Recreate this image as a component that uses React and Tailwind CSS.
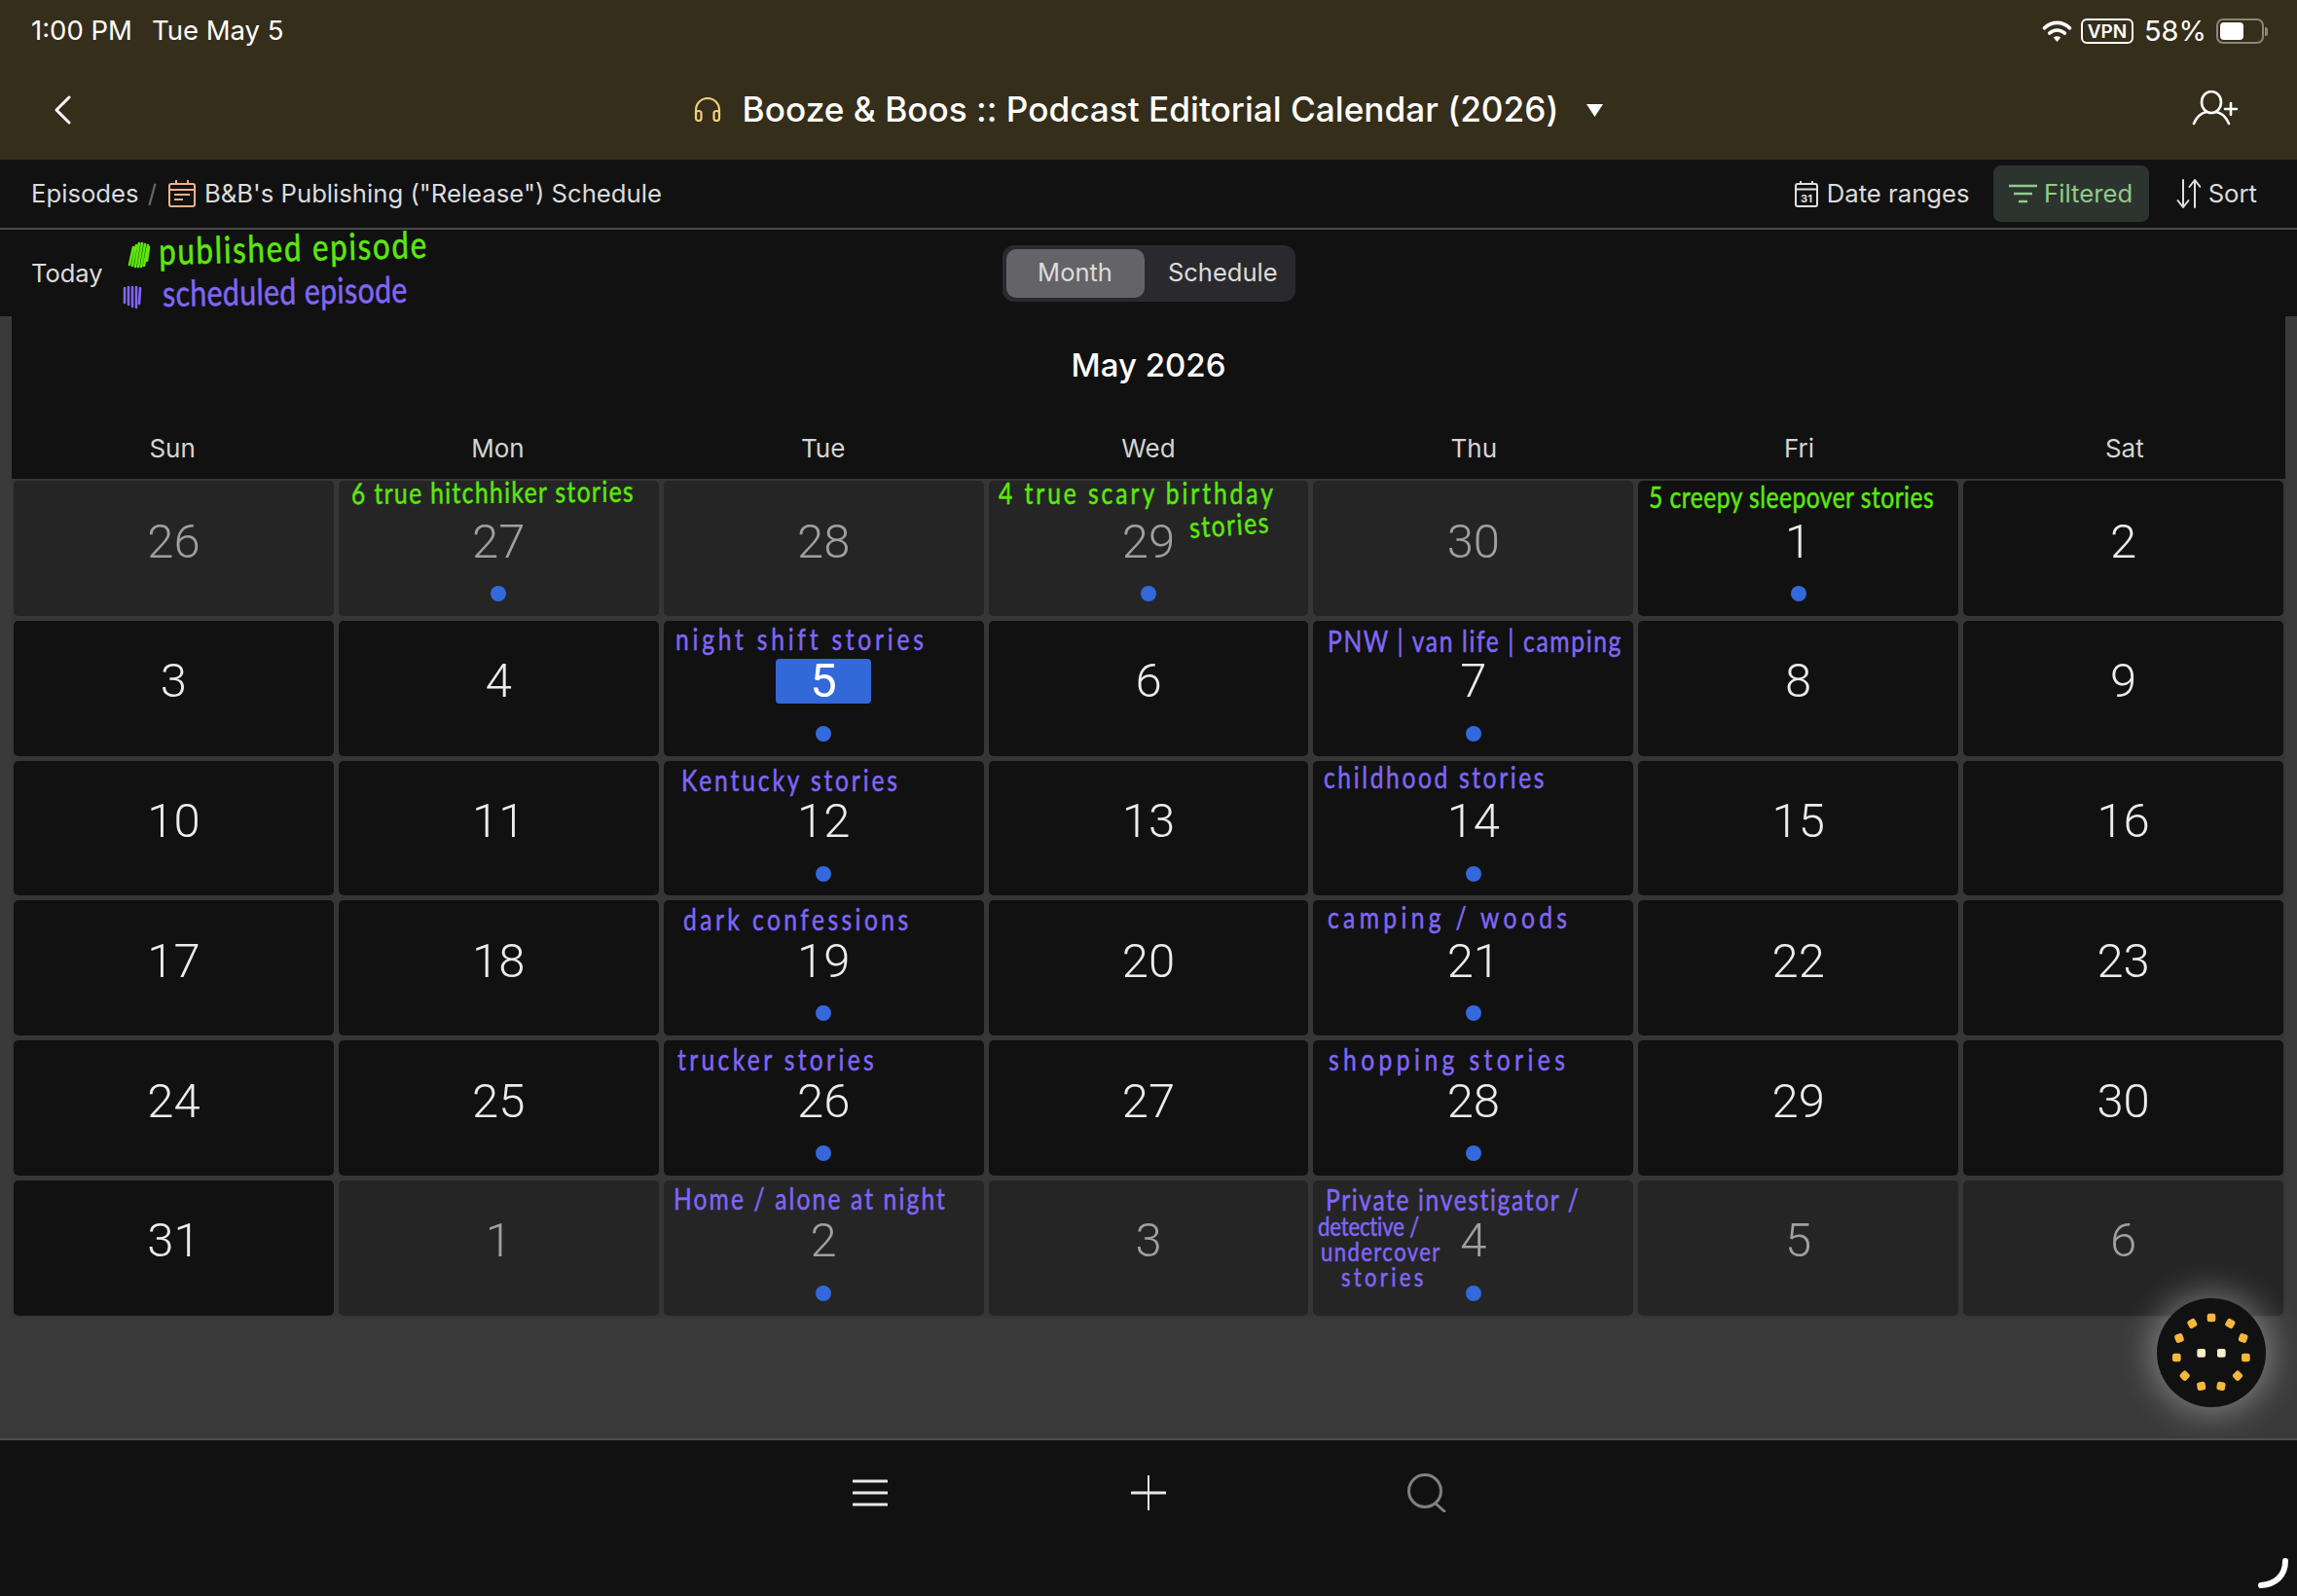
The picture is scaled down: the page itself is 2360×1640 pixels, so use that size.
const weekdays = ["Sun", "Mon", "Tue", "Wed", "Thu", "Fri", "Sat"];

const green = "text-[#5ce80e]";
const purple = "text-[#8066f6]";

// handwritten annotations, keyed by the cell's position in the grid
const notes = {
  1: [{ text: "6 true hitchhiker stories", cls: `text-[30px] left-[13px] top-[-1px] tracking-[1.7px] -rotate-[0.5deg] ${green}` }],
  3: [
    { text: "4 true scary birthday", cls: `text-[30px] left-[10px] top-[-1px] tracking-[3.6px] ${green}` },
    { text: "stories", cls: `text-[30px] left-[206px] top-[34px] tracking-[1.9px] -rotate-[4deg] ${green}` },
  ],
  5: [{ text: "5 creepy sleepover stories", cls: `text-[30px] left-[11px] top-[3px] tracking-[0.6px] ${green}` }],
  9: [{ text: "night shift stories", cls: `text-[30px] left-[12px] top-[5px] tracking-[4.6px] ${purple}` }],
  11: [{ text: "PNW | van life | camping", cls: `text-[30px] left-[15px] top-[7px] tracking-[2px] ${purple}` }],
  16: [{ text: "Kentucky stories", cls: `text-[30px] left-[18px] top-[6px] tracking-[3.5px] ${purple}` }],
  18: [{ text: "childhood stories", cls: `text-[30px] left-[11px] top-[3px] tracking-[3.2px] ${purple}` }],
  23: [{ text: "dark confessions", cls: `text-[30px] left-[20px] top-[6px] tracking-[4.2px] ${purple}` }],
  25: [{ text: "camping / woods", cls: `text-[30px] left-[15px] top-[4px] tracking-[5.3px] ${purple}` }],
  30: [{ text: "trucker stories", cls: `text-[30px] left-[14px] top-[6px] tracking-[4.1px] ${purple}` }],
  32: [{ text: "shopping stories", cls: `text-[30px] left-[16px] top-[6px] tracking-[5.4px] ${purple}` }],
  37: [{ text: "Home / alone at night", cls: `text-[30px] left-[10px] top-[5px] tracking-[2.6px] ${purple}` }],
  39: [
    { text: "Private investigator /", cls: `text-[30px] left-[13px] top-[6px] tracking-[2px] ${purple}` },
    { text: "detective /", cls: `text-[27px] left-[5px] top-[34px] tracking-[-0.2px] ${purple}` },
    { text: "undercover", cls: `text-[27px] left-[8px] top-[60px] tracking-[1.7px] ${purple}` },
    { text: "stories", cls: `text-[27px] left-[29px] top-[86px] tracking-[4px] ${purple}` },
  ],
};

const withDot = new Set([1, 3, 5, 9, 11, 16, 18, 23, 25, 30, 32, 37, 39]);

const days = [
  26, 27, 28, 29, 30, 1, 2,
  3, 4, 5, 6, 7, 8, 9,
  10, 11, 12, 13, 14, 15, 16,
  17, 18, 19, 20, 21, 22, 23,
  24, 25, 26, 27, 28, 29, 30,
  31, 1, 2, 3, 4, 5, 6,
];

function isOutside(i) {
  return i < 5 || i > 35;
}

function DayCell({ day, index }) {
  const outside = isOutside(index);
  const today = index === 9;
  return (
    <div className={`relative h-[138.8px] rounded-[5px] flex flex-col items-center pt-[39px] ${outside ? "bg-[#252525]" : "bg-[#111111]"}`}>
      {today ? (
        <div className="w-[98px] h-[46px] rounded-[4px] bg-[#3368d8] flex items-center justify-center text-[49px] text-white font-['Roboto',sans-serif] leading-none">
          {day}
        </div>
      ) : (
        <div className={`h-[46px] flex items-center text-[49px] font-light font-['Roboto',sans-serif] leading-none ${outside ? "text-[#a0a0a0]" : "text-[#ececec]"}`}>
          {day}
        </div>
      )}
      {withDot.has(index) && <div className="mt-[23px] w-[16px] h-[16px] rounded-full bg-[#3369dc]" />}
      {(notes[index] || []).map((n) => (
        <span key={n.text} className={`absolute whitespace-nowrap leading-[26px] origin-left scale-x-[0.82] [-webkit-text-stroke:0.5px_currentColor] font-['Lato',sans-serif] ${n.cls}`}>
          {n.text}
        </span>
      ))}
    </div>
  );
}

function StatusBar() {
  return (
    <div className="h-[64px] flex items-center justify-between pl-[32px] pr-[30px] text-white text-[27.500px]">
      <div className="flex items-center gap-[20px]">
        <span>1:00 PM</span>
        <span>Tue May 5</span>
      </div>
      <div className="flex items-center">
        <svg width="31" height="23" viewBox="0 0 29 22" fill="none" stroke="white" strokeWidth="3.4" strokeLinecap="round">
          <path d="M2 7.5C9.5 .5 19.5 .5 27 7.5" />
          <path d="M7 12.5C11.5 8.5 17.5 8.5 22 12.5" />
          <path d="M14.5 21l-3.6-4.2c2-1.6 5.2-1.6 7.2 0z" fill="white" stroke="none" />
        </svg>
        <div className="ml-[9px] w-[54px] h-[26px] rounded-[6px] border-2 border-white flex items-center justify-center text-[19px] font-semibold leading-none">VPN</div>
        <span className="ml-[11px] text-[29px]">58%</span>
        <div className="ml-[10px] w-[49px] h-[26px] rounded-[7px] border-2 border-[#8a867a] p-[2px]">
          <div className="w-[24px] h-full rounded-[4px] bg-white" />
        </div>
        <div className="ml-[1px] w-[3px] h-[9px] rounded-r-[2px] bg-[#8a867a]" />
      </div>
    </div>
  );
}

function NavBar() {
  return (
    <div className="h-[100px] relative flex items-center justify-center text-white">
      <svg className="absolute left-[54px] top-[34px]" width="20" height="30" viewBox="0 0 20 30" fill="none" stroke="white" strokeWidth="3" strokeLinecap="round" strokeLinejoin="round">
        <path d="M17 2L4 15l13 13" />
      </svg>
      <div className="flex items-center -mt-[2px]">
        <svg width="28" height="25" viewBox="0 0 28 25" fill="none" stroke="#f3cf78" strokeWidth="2.2" strokeLinejoin="round">
          <path d="M2 18v-5a12 12 0 0 1 24 0v5" />
          <rect x="2" y="14" width="5.5" height="10" rx="2.5" />
          <rect x="20.500" y="14" width="5.500" height="10" rx="2.500" />
        </svg>
        <span className="ml-[22px] text-[35.200px] font-medium leading-none [font-feature-settings:'calt'_0]">Booze &amp; Boos :: Podcast Editorial Calendar (2026)</span>
        <svg className="ml-[29px] mt-[2px]" width="17" height="13" viewBox="0 0 17 13" fill="white">
          <path d="M0 0h17L8.500 13z" />
        </svg>
      </div>
      <svg className="absolute right-[60px] top-[29px]" width="48" height="36" viewBox="0 0 48 36" fill="none" stroke="white" strokeWidth="2.6" strokeLinecap="round">
        <ellipse cx="20" cy="12" rx="10" ry="11" />
        <path d="M2 34c3-7 8-11 13-12M38 34c-3-7-8-11-13-12" />
        <path d="M34 19h12M40 13v12" />
      </svg>
    </div>
  );
}

function Toolbar() {
  return (
    <div className="h-[72px] bg-[#111111] border-b-2 border-[#4a4a4a] flex items-center justify-between pl-[32px] pr-[41px] text-[25.700px] text-[#dcdcdc]">
      <div className="flex items-center">
        <span>Episodes</span>
        <span className="ml-[9px] text-[#6a6a6a]">/</span>
        <svg className="ml-[12px]" width="28" height="28" viewBox="0 0 28 28" fill="none" stroke="#f0b08c" strokeWidth="2">
          <rect x="1" y="4" width="26" height="23" rx="2" />
          <path d="M1 10h26M8 0v4M20 0v4M6 15h16M6 20h9" />
        </svg>
        <span className="ml-[9px]">B&amp;B's Publishing ("Release") Schedule</span>
      </div>
      <div className="flex items-center">
        <svg width="24" height="27" viewBox="0 0 24 27" fill="none" stroke="#e0e0e0" strokeWidth="2">
          <rect x="1" y="3" width="22" height="23" rx="2" />
          <path d="M1 8.500h22M6 0v4M18 0v4" />
          <text x="12" y="22" fontSize="11" fontWeight="700" fill="#e0e0e0" stroke="none" textAnchor="middle">31</text>
        </svg>
        <span className="ml-[9px]">Date ranges</span>
        <div className="ml-[24px] h-[58px] w-[160px] rounded-[8px] bg-[#2d342f] flex items-center justify-center text-[#90cb88]">
          <svg width="29" height="20" viewBox="0 0 29 20" fill="none" stroke="#90cb88" strokeWidth="2.4">
            <path d="M0 2h29M5 10h19M10 18h9" />
          </svg>
          <span className="ml-[7px]">Filtered</span>
        </div>
        <svg className="ml-[28px]" width="25" height="32" viewBox="0 0 25 32" fill="none" stroke="#e0e0e0" strokeWidth="2" strokeLinecap="round" strokeLinejoin="round">
          <path d="M7 2v28M1.500 23l5.500 7 5.500-7" />
          <path d="M19 30V2M13.500 9l5.500-7 5.500 7" />
        </svg>
        <span className="ml-[8px]">Sort</span>
      </div>
    </div>
  );
}

function ViewBar() {
  return (
    <div className="h-[89px] bg-[#111111] relative flex items-center justify-center">
      <div className="absolute left-[32px] top-[30px] text-[25.500px] text-[#dcdcdc] leading-[30px]">Today</div>
      <svg className="absolute left-[130px] top-[10px]" width="26" height="30" viewBox="0 0 26 30" fill="none" stroke="#5ce80e" strokeWidth="2.6" strokeLinecap="round">
        <path d="M3 26L7 8M6 27L10 6M9 28L13 4M12 28L16 4M15 28L19 5M18 27L22 6M21 22L23 8" />
      </svg>
      <span className="absolute left-[163px] top-[3px] text-[38px] leading-[36px] tracking-[2.2px] origin-left scale-x-[0.82] [-webkit-text-stroke:0.6px_currentColor] font-['Lato',sans-serif] text-[#5ce80e] -rotate-[1.5deg]">published episode</span>
      <svg className="absolute left-[125px] top-[56px]" width="22" height="26" viewBox="0 0 22 26" fill="none" stroke="#8066f6" strokeWidth="2.6" strokeLinecap="round">
        <path d="M3 4L3 19M7 3L7 21M11 3L11 23M15 3L15 24M19 4L18 20" />
      </svg>
      <span className="absolute left-[167px] top-[48px] text-[37px] leading-[34px] tracking-[0.4px] origin-left scale-x-[0.82] [-webkit-text-stroke:0.5px_currentColor] font-['Lato',sans-serif] text-[#8066f6] -rotate-[1deg]">scheduled episode</span>
      <div className="h-[58px] w-[301px] rounded-[12px] bg-[#2a2a2e] flex items-center p-[4px] text-[25.500px] text-[#dcdcdc]">
        <div className="w-[142px] h-[50px] rounded-[10px] bg-[#636368] flex items-center justify-center">Month</div>
        <div className="flex-1 flex items-center justify-end pr-[14px]">Schedule</div>
      </div>
    </div>
  );
}

function Calendar() {
  return (
    <div className="bg-[#3a3a3a] px-[12px]">
      <div className="bg-[#111111] h-[110px] flex items-center justify-center pb-[8px] text-[33px] font-medium text-white">May 2026</div>
      <div className="bg-[#111111] h-[57px] pb-[7px] flex items-center">
        <div className="flex-1 grid grid-cols-7 -mx-[2px] text-[26px] text-[#d4d4d4]">
          {weekdays.map((d) => (
            <div key={d} className="flex items-center justify-center">{d}</div>
          ))}
        </div>
      </div>
      <div className="bg-[#363636] px-[2px] py-[2px] grid grid-cols-7 gap-[5px]">
        {days.map((d, i) => (
          <DayCell key={i} day={d} index={i} />
        ))}
      </div>
    </div>
  );
}

function BottomBar() {
  return (
    <div className="h-[162px] bg-[#111111] border-t-2 border-[#4d4d4d] flex justify-center pt-[33px]">
      <div className="w-[286px] h-[42px] flex items-center justify-center">
        <svg width="36" height="28" viewBox="0 0 36 28" fill="none" stroke="#e8e8e8" strokeWidth="3" strokeLinecap="round">
          <path d="M1 2h34M1 14h34M1 26h34" />
        </svg>
      </div>
      <div className="w-[286px] h-[42px] flex items-center justify-center">
        <svg width="36" height="36" viewBox="0 0 36 36" fill="none" stroke="#e8e8e8" strokeLinecap="round">
          <path d="M1 18h34" strokeWidth="3" />
          <path d="M18 0v36" strokeWidth="2" />
        </svg>
      </div>
      <div className="w-[286px] h-[42px] flex items-center justify-center">
        <svg width="40" height="40" viewBox="0 0 40 40" fill="none" stroke="#808080" strokeWidth="3" strokeLinecap="round">
          <circle cx="18" cy="18" r="16.500" />
          <path d="M29 31l9 8" />
        </svg>
      </div>
    </div>
  );
}

const fabDots = [
  [516, 162, 0], [574, 180, 30], [614, 225, 20], [622, 285, 0], [597, 341, 45], [546, 373, 10],
  [485, 373, -10], [434, 341, 45], [409, 285, 0], [417, 225, -20], [457, 180, -30],
];

function Fab() {
  return (
    <div className="absolute left-[2216px] top-[1334px] w-[112px] h-[112px] rounded-full bg-[#111111] shadow-[0_0_34px_6px_rgba(255,255,255,0.35)]">
      <svg width="112" height="112" viewBox="348 102 336 336">
        {fabDots.map(([x, y, r]) => (
          <rect key={`${x}-${y}`} x={x - 13} y={y - 13} width="26" height="26" rx="7" fill="#f5b83d" transform={`rotate(${r} ${x} ${y})`} />
        ))}
        <rect x="472" y="258" width="26" height="26" rx="6" fill="#fdf0c8" />
        <rect x="534" y="258" width="26" height="26" rx="6" fill="#fdf0c8" />
      </svg>
    </div>
  );
}

export default function App() {
  return (
    <div className="relative w-[2360px] h-[1640px] overflow-hidden bg-[#3a3a3a] flex flex-col font-['Inter',sans-serif]">
      <div className="bg-[#352e1b]">
        <StatusBar />
        <NavBar />
      </div>
      <Toolbar />
      <ViewBar />
      <Calendar />
      <div className="flex-1 bg-[#3a3a3a]" />
      <BottomBar />
      <Fab />
      <svg className="absolute left-[2318px] top-[1599px]" width="36" height="36" viewBox="0 0 36 36" fill="none" stroke="white" strokeWidth="6" strokeLinecap="round">
        <path d="M30 5C30 20 20 29 5 30" />
      </svg>
    </div>
  );
}
